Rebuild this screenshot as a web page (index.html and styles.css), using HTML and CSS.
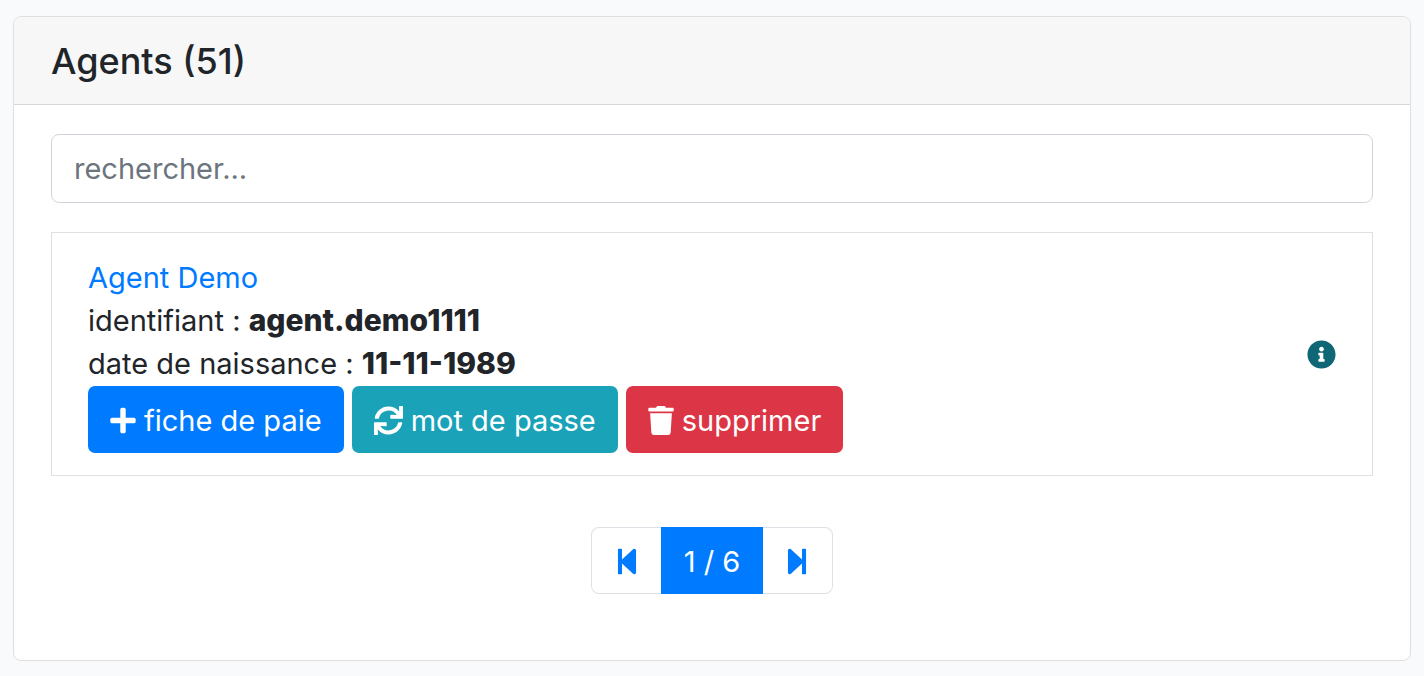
FILE: index.html
```html
<!DOCTYPE html>
<html lang="fr">
<head>
<meta charset="utf-8">
<meta name="viewport" content="width=device-width, initial-scale=1">
<title>Agents</title>
<link rel="stylesheet" href="styles.css">
</head>
<body>
<main class="card">
  <header class="card-header">
    <h1 class="card-title">Agents (51)</h1>
  </header>
  <div class="card-body">
    <input class="search" type="search" placeholder="rechercher..." aria-label="rechercher">
    <ul class="agents">
      <li class="agent">
        <div class="agent-main">
          <a class="agent-name" href="#">Agent Demo</a>
          <div class="agent-line">identifiant : <strong>agent.demo1111</strong></div>
          <div class="agent-line">date de naissance : <strong>11-11-1989</strong></div>
          <div class="actions">
            <button class="btn btn-primary" type="button">
              <svg class="icon icon-narrow" viewBox="0 0 448 512" aria-hidden="true"><path d="M416 208H272V64c0-17.67-14.33-32-32-32h-32c-17.67 0-32 14.33-32 32v144H32c-17.67 0-32 14.33-32 32v32c0 17.67 14.33 32 32 32h144v144c0 17.67 14.33 32 32 32h32c17.67 0 32-14.33 32-32V304h144c17.67 0 32-14.33 32-32v-32c0-17.67-14.33-32-32-32z"/></svg>
              fiche de paie
            </button>
            <button class="btn btn-info" type="button">
              <svg class="icon" viewBox="0 0 512 512" aria-hidden="true"><path d="M440.65 12.57l4 82.77A247.16 247.16 0 0 0 255.83 8C134.73 8 33.91 94.92 12.29 209.82A12 12 0 0 0 24.09 224h49.05a12 12 0 0 0 11.67-9.26 175.91 175.91 0 0 1 317-56.94l-101.46-4.86a12 12 0 0 0-12.57 12v47.41a12 12 0 0 0 12 12H500a12 12 0 0 0 12-12V12a12 12 0 0 0-12-12h-47.37a12 12 0 0 0-11.98 12.57zM255.83 432a175.61 175.61 0 0 1-146-77.8l101.8 4.87a12 12 0 0 0 12.57-12v-47.4a12 12 0 0 0-12-12H12a12 12 0 0 0-12 12V500a12 12 0 0 0 12 12h47.35a12 12 0 0 0 12-12.6l-4.15-82.57A247.17 247.17 0 0 0 255.83 504c121.11 0 221.93-86.92 243.55-201.82a12 12 0 0 0-11.8-14.18h-49.05a12 12 0 0 0-11.67 9.26A175.86 175.86 0 0 1 255.83 432z"/></svg>
              mot de passe
            </button>
            <button class="btn btn-danger" type="button">
              <svg class="icon icon-narrow" viewBox="0 0 448 512" aria-hidden="true"><path d="M432 32H312l-9.4-18.7A24 24 0 0 0 281.1 0H166.8a23.72 23.72 0 0 0-21.4 13.3L136 32H16A16 16 0 0 0 0 48v32a16 16 0 0 0 16 16h416a16 16 0 0 0 16-16V48a16 16 0 0 0-16-16zM53.2 467a48 48 0 0 0 47.9 45h245.8a48 48 0 0 0 47.9-45L416 128H32z"/></svg>
              supprimer
            </button>
          </div>
        </div>
        <button class="info" type="button" aria-label="informations">
          <svg class="icon" viewBox="0 0 512 512" aria-hidden="true"><path d="M256 8C119.043 8 8 119.083 8 256c0 136.997 111.043 248 248 248s248-111.003 248-248C504 119.083 392.957 8 256 8zm0 110c23.196 0 42 18.804 42 42s-18.804 42-42 42-42-18.804-42-42 18.804-42 42-42zm56 254c0 6.627-5.373 12-12 12h-88c-6.627 0-12-5.373-12-12v-24c0-6.627 5.373-12 12-12h12v-64h-12c-6.627 0-12-5.373-12-12v-24c0-6.627 5.373-12 12-12h64c6.627 0 12 5.373 12 12v100h12c6.627 0 12 5.373 12 12v24z"/></svg>
        </button>
      </li>
    </ul>
    <nav class="pagination" aria-label="pagination">
      <a class="page page-first" href="#" aria-label="page précédente">
        <svg class="icon icon-narrow" viewBox="0 0 448 512" aria-hidden="true"><path d="M64 468V44c0-6.600 5.400-12 12-12h48c6.600 0 12 5.400 12 12v176.400l195.500-181C352.100 22.300 384 36.600 384 64v384c0 27.400-31.900 41.700-52.500 24.600L136 292.700V468c0 6.600-5.400 12-12 12H76c-6.600 0-12-5.400-12-12z"/></svg>
      </a>
      <a class="page page-current" href="#" aria-current="page">1 / 6</a>
      <a class="page page-last" href="#" aria-label="page suivante">
        <svg class="icon icon-narrow" viewBox="0 0 448 512" aria-hidden="true"><path d="M384 44v424c0 6.600-5.400 12-12 12h-48c-6.600 0-12-5.400-12-12V291.600l-195.500 181C95.900 489.700 64 475.400 64 448V64c0-27.400 31.900-41.700 52.500-24.600L312 219.300V44c0-6.600 5.400-12 12-12h48c6.600 0 12 5.400 12 12z"/></svg>
      </a>
    </nav>
  </div>
</main>
</body>
</html>
```
FILE: styles.css
```css
* {
  box-sizing: border-box;
}

body {
  margin: 0;
  padding: 16px 13px;
  background: #f8fafc;
  color: #212529;
  font-family: Inter, "Liberation Sans", sans-serif;
  font-size: 29px;
  line-height: 43px;
}

.card {
  background: #fff;
  border: 1px solid #dfdfdf;
  border-radius: 8px;
  overflow: hidden;
}

.card-header {
  padding: 23px 37px 21px;
  background: #f7f7f7;
  border-bottom: 1px solid #d8d8d8;
}

.card-title {
  margin: 0;
  font-size: 36px;
  font-weight: 500;
  line-height: 43px;
}

.card-body {
  padding: 29px 37px 66px;
}

.search {
  display: block;
  width: 100%;
  padding: 12px 22px;
  border: 1px solid #ced4da;
  border-radius: 8px;
  background: #fff;
  color: #495057;
  font: inherit;
  appearance: none;
}

.search::placeholder {
  color: #6c757d;
  opacity: 1;
}

.agents {
  margin: 29px 0 51px;
  padding: 0;
  list-style: none;
}

.agent {
  display: flex;
  align-items: center;
  justify-content: space-between;
  padding: 23px 36px 22px;
  border: 1px solid #dfdfdf;
}

.agent-name {
  display: inline-block;
  color: #007bff;
  text-decoration: none;
}

.agent-line strong {
  font-size: 30px;
  font-weight: 800;
  line-height: 1;
}

.actions {
  display: flex;
  flex-wrap: wrap;
  gap: 8px;
  margin-top: 1px;
}

.btn {
  display: inline-flex;
  align-items: center;
  gap: 8px;
  padding: 13px 22px 11px;
  border: 0;
  border-radius: 7px;
  color: #fff;
  font: inherit;
  cursor: pointer;
}

.btn-primary {
  background: #007bff;
}

.btn-info {
  background: #1aa2b8;
}

.btn-danger {
  background: #dc3545;
}

.icon {
  display: block;
  width: 29px;
  height: 29px;
  fill: currentColor;
}

.icon-narrow {
  width: 26px;
}

.info {
  padding: 0;
  border: 0;
  background: none;
  color: #0f6674;
  cursor: pointer;
}

.pagination {
  display: flex;
  justify-content: center;
}

.page {
  display: flex;
  align-items: center;
  padding: 12px 22px 10px;
  border: 1px solid #dee2e6;
  color: #007bff;
  text-decoration: none;
}

.page-first {
  padding-right: 21px;
  border-right: 0;
  border-radius: 8px 0 0 8px;
}

.page-current {
  border-color: #007bff;
  background: #007bff;
  color: #fff;
}

.page-last {
  padding-left: 21px;
  border-left: 0;
  border-radius: 0 8px 8px 0;
}
```
